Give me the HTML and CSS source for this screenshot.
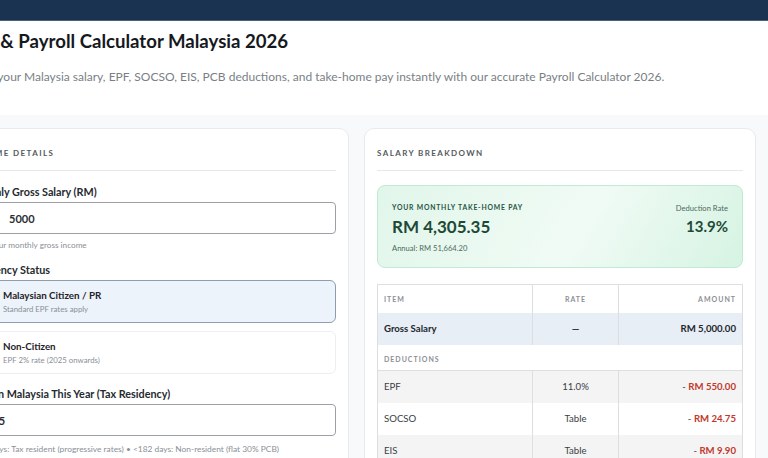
FILE: index.html
```html
<!DOCTYPE html>
<html lang="en">
<head>
  <meta charset="UTF-8">
  <meta name="viewport" content="width=device-width, initial-scale=1.0">
  <title>Salary &amp; Payroll Calculator Malaysia 2026</title>
  <link rel="stylesheet" href="styles.css">
</head>
<body>
  <div class="topbar"></div>

  <header class="hero">
    <div class="hero-inner">
      <h1>Salary &amp; Payroll Calculator Malaysia 2026</h1>
      <p>Calculate your Malaysia salary, EPF, SOCSO, EIS, PCB deductions, and take-home pay instantly with our accurate Payroll Calculator 2026.</p>
    </div>
  </header>

  <main class="layout">
    <section class="card">
      <h2 class="card-title">Income Details</h2>

      <div class="field">
        <label class="field-label">Monthly Gross Salary (RM)</label>
        <div class="input-wrap">
          <span class="prefix">RM</span>
          <input class="input input-prefixed" type="text" value="5000">
        </div>
        <p class="hint">Enter your monthly gross income</p>
      </div>

      <div class="field">
        <label class="field-label">Residency Status</label>
        <div class="options">
          <label class="option selected">
            <span class="radio"></span>
            <span class="option-text">
              <strong>Malaysian Citizen / PR</strong>
              <small>Standard EPF rates apply</small>
            </span>
          </label>
          <label class="option">
            <span class="radio"></span>
            <span class="option-text">
              <strong>Non-Citizen</strong>
              <small>EPF 2% rate (2025 onwards)</small>
            </span>
          </label>
        </div>
      </div>

      <div class="field">
        <label class="field-label">Days in Malaysia This Year (Tax Residency)</label>
        <input class="input" type="text" value="365">
        <p class="hint hint-wide">&ge;182 days: Tax resident (progressive rates) &bull; &lt;182 days: Non-resident (flat 30% PCB)</p>
      </div>
    </section>

    <section class="card">
      <h2 class="card-title">Salary Breakdown</h2>

      <div class="takehome">
        <div>
          <div class="takehome-label">Your Monthly Take-Home Pay</div>
          <div class="takehome-value">RM 4,305.35</div>
          <div class="takehome-annual">Annual: RM 51,664.20</div>
        </div>
        <div class="rate-box">
          <div class="rate-label">Deduction Rate</div>
          <div class="rate-value">13.9%</div>
        </div>
      </div>

      <table class="breakdown">
        <thead>
          <tr>
            <th class="col-item">Item</th>
            <th class="col-rate">Rate</th>
            <th class="col-amount">Amount</th>
          </tr>
        </thead>
        <tbody>
          <tr class="row-gross">
            <td>Gross Salary</td>
            <td class="col-rate">&mdash;</td>
            <td class="col-amount">RM 5,000.00</td>
          </tr>
          <tr class="row-section">
            <td colspan="3">Deductions</td>
          </tr>
          <tr class="row-alt">
            <td>EPF</td>
            <td class="col-rate">11.0%</td>
            <td class="col-amount minus">- <b>RM 550.00</b></td>
          </tr>
          <tr>
            <td>SOCSO</td>
            <td class="col-rate">Table</td>
            <td class="col-amount minus">- <b>RM 24.75</b></td>
          </tr>
          <tr class="row-alt">
            <td>EIS</td>
            <td class="col-rate">Table</td>
            <td class="col-amount minus">- <b>RM 9.90</b></td>
          </tr>
        </tbody>
      </table>
    </section>
  </main>
</body>
</html>
```

FILE: styles.css
```css
* {
  box-sizing: border-box;
}
body {
  margin: 0;
  font-family: 'Lato', 'Noto Sans', sans-serif;
  background: #f8f9fb;
  color: #1f2328;
  overflow: hidden;
}
.topbar {
  height: 21px;
  background: #1a3350;
  border-bottom: 1px solid #4a6078;
}
.hero {
  background: #fff;
  height: 94px;
  overflow: hidden;
}
.hero-inner {
  margin-left: -54px;
  padding-top: 9px;
}
.hero h1 {
  margin: 0;
  font-size: 18.6px;
  font-weight: 700;
  color: #15191e;
  white-space: nowrap;
}
.hero p {
  margin: 17px 0 0;
  font-size: 12px;
  color: #7a7f86;
  white-space: nowrap;
}
.layout {
  display: grid;
  grid-template-columns: 393px 392px;
  gap: 15px;
  margin-left: -44px;
  padding-top: 13px;
}
.card {
  background: #fff;
  border: 1px solid #e8eaee;
  border-radius: 10px;
  padding: 19px 12px 20px;
  height: 360px;
}
.card-title {
  margin: 0 0 14px;
  padding-bottom: 12px;
  border-bottom: 1px solid #e6e8eb;
  font-size: 8px;
  font-weight: 700;
  letter-spacing: 1.4px;
  text-transform: uppercase;
  color: #555a60;
}
.field {
  margin-bottom: 13px;
}
.field-label {
  display: block;
  font-size: 10.8px;
  font-weight: 700;
  color: #262a2f;
  margin-bottom: 4px;
}
.input-wrap {
  position: relative;
}
.prefix {
  position: absolute;
  left: 14px;
  top: 10px;
  font-size: 10px;
  color: #888;
}
.input {
  display: block;
  width: 100%;
  height: 32px;
  border: 1px solid #9c9fa4;
  border-radius: 4px;
  padding: 0 16px;
  font-family: inherit;
  font-size: 11px;
  font-weight: 700;
  color: #2a2e33;
  background: #fff;
}
.input-prefixed {
  padding-left: 39px;
}
.hint {
  margin: 6px 0 0;
  font-size: 8.2px;
  color: #8a8f96;
  white-space: nowrap;
}
.hint-wide {
  margin-top: 8px;
  font-size: 8.4px;
}
.options {
  display: flex;
  flex-direction: column;
  gap: 8px;
}
.option {
  display: flex;
  align-items: center;
  gap: 8px;
  height: 43px;
  padding: 0 12px;
  border: 1px solid #eceef1;
  border-radius: 6px;
  background: #fff;
}
.option.selected {
  background: #edf3fa;
  border-color: #8e9db0;
}
.radio {
  width: 13px;
  height: 13px;
  border-radius: 50%;
  border: 1px solid #999;
  flex: none;
}
.option.selected .radio {
  border: 4px solid #1a3350;
}
.option-text {
  display: flex;
  flex-direction: column;
  gap: 3px;
}
.option-text strong {
  font-size: 9.8px;
  font-weight: 700;
  color: #1f2328;
}
.option-text small {
  font-size: 7.8px;
  color: #8a8f96;
}
.takehome {
  display: flex;
  justify-content: space-between;
  height: 83px;
  padding: 17px 14px 0;
  border: 1px solid #bfead3;
  border-radius: 8px;
  background: linear-gradient(120deg, #e1f6ea, #f0fbf5 55%, #d6f3e3);
}
.takehome-label {
  font-size: 6.8px;
  font-weight: 700;
  letter-spacing: 0.8px;
  text-transform: uppercase;
  color: #25543f;
}
.takehome-value {
  margin-top: 5px;
  font-size: 17px;
  font-weight: 700;
  color: #1d4a37;
}
.takehome-annual {
  margin-top: 6px;
  font-size: 7.6px;
  color: #4d6a5c;
}
.rate-box {
  text-align: right;
}
.rate-label {
  font-size: 7.6px;
  color: #4d6a5c;
}
.rate-value {
  margin-top: 4px;
  font-size: 15px;
  font-weight: 700;
  color: #1d4a37;
}
.breakdown {
  width: 100%;
  margin-top: 16px;
  border-collapse: collapse;
  border: 1px solid #dcdee2;
  font-size: 9.6px;
}
.breakdown th {
  height: 28px;
  padding: 0 6px;
  font-size: 7px;
  font-weight: 700;
  letter-spacing: 1px;
  text-transform: uppercase;
  color: #8c9096;
  text-align: left;
}
.breakdown td {
  height: 32px;
  padding: 0 6px;
  color: #3a3e44;
}
.breakdown th + th,
.breakdown td + td {
  border-left: 1px solid #dcdee2;
}
.col-item {
  width: 155px;
}
.breakdown .col-rate {
  width: 86px;
  text-align: center;
}
.breakdown .col-amount {
  text-align: right;
  padding-right: 6px;
}
.row-gross td {
  background: #e8eef5;
  font-weight: 700;
  color: #22272d;
}
.row-section td {
  height: 26px;
  padding-top: 3px;
  font-size: 7px;
  font-weight: 700;
  letter-spacing: 1px;
  text-transform: uppercase;
  color: #8c9096;
  border-bottom: 1px solid #dcdee2;
}
.row-alt td {
  background: #f4f4f5;
}
.minus {
  color: #c9605a;
}
.minus b {
  color: #c0392b;
}
```
